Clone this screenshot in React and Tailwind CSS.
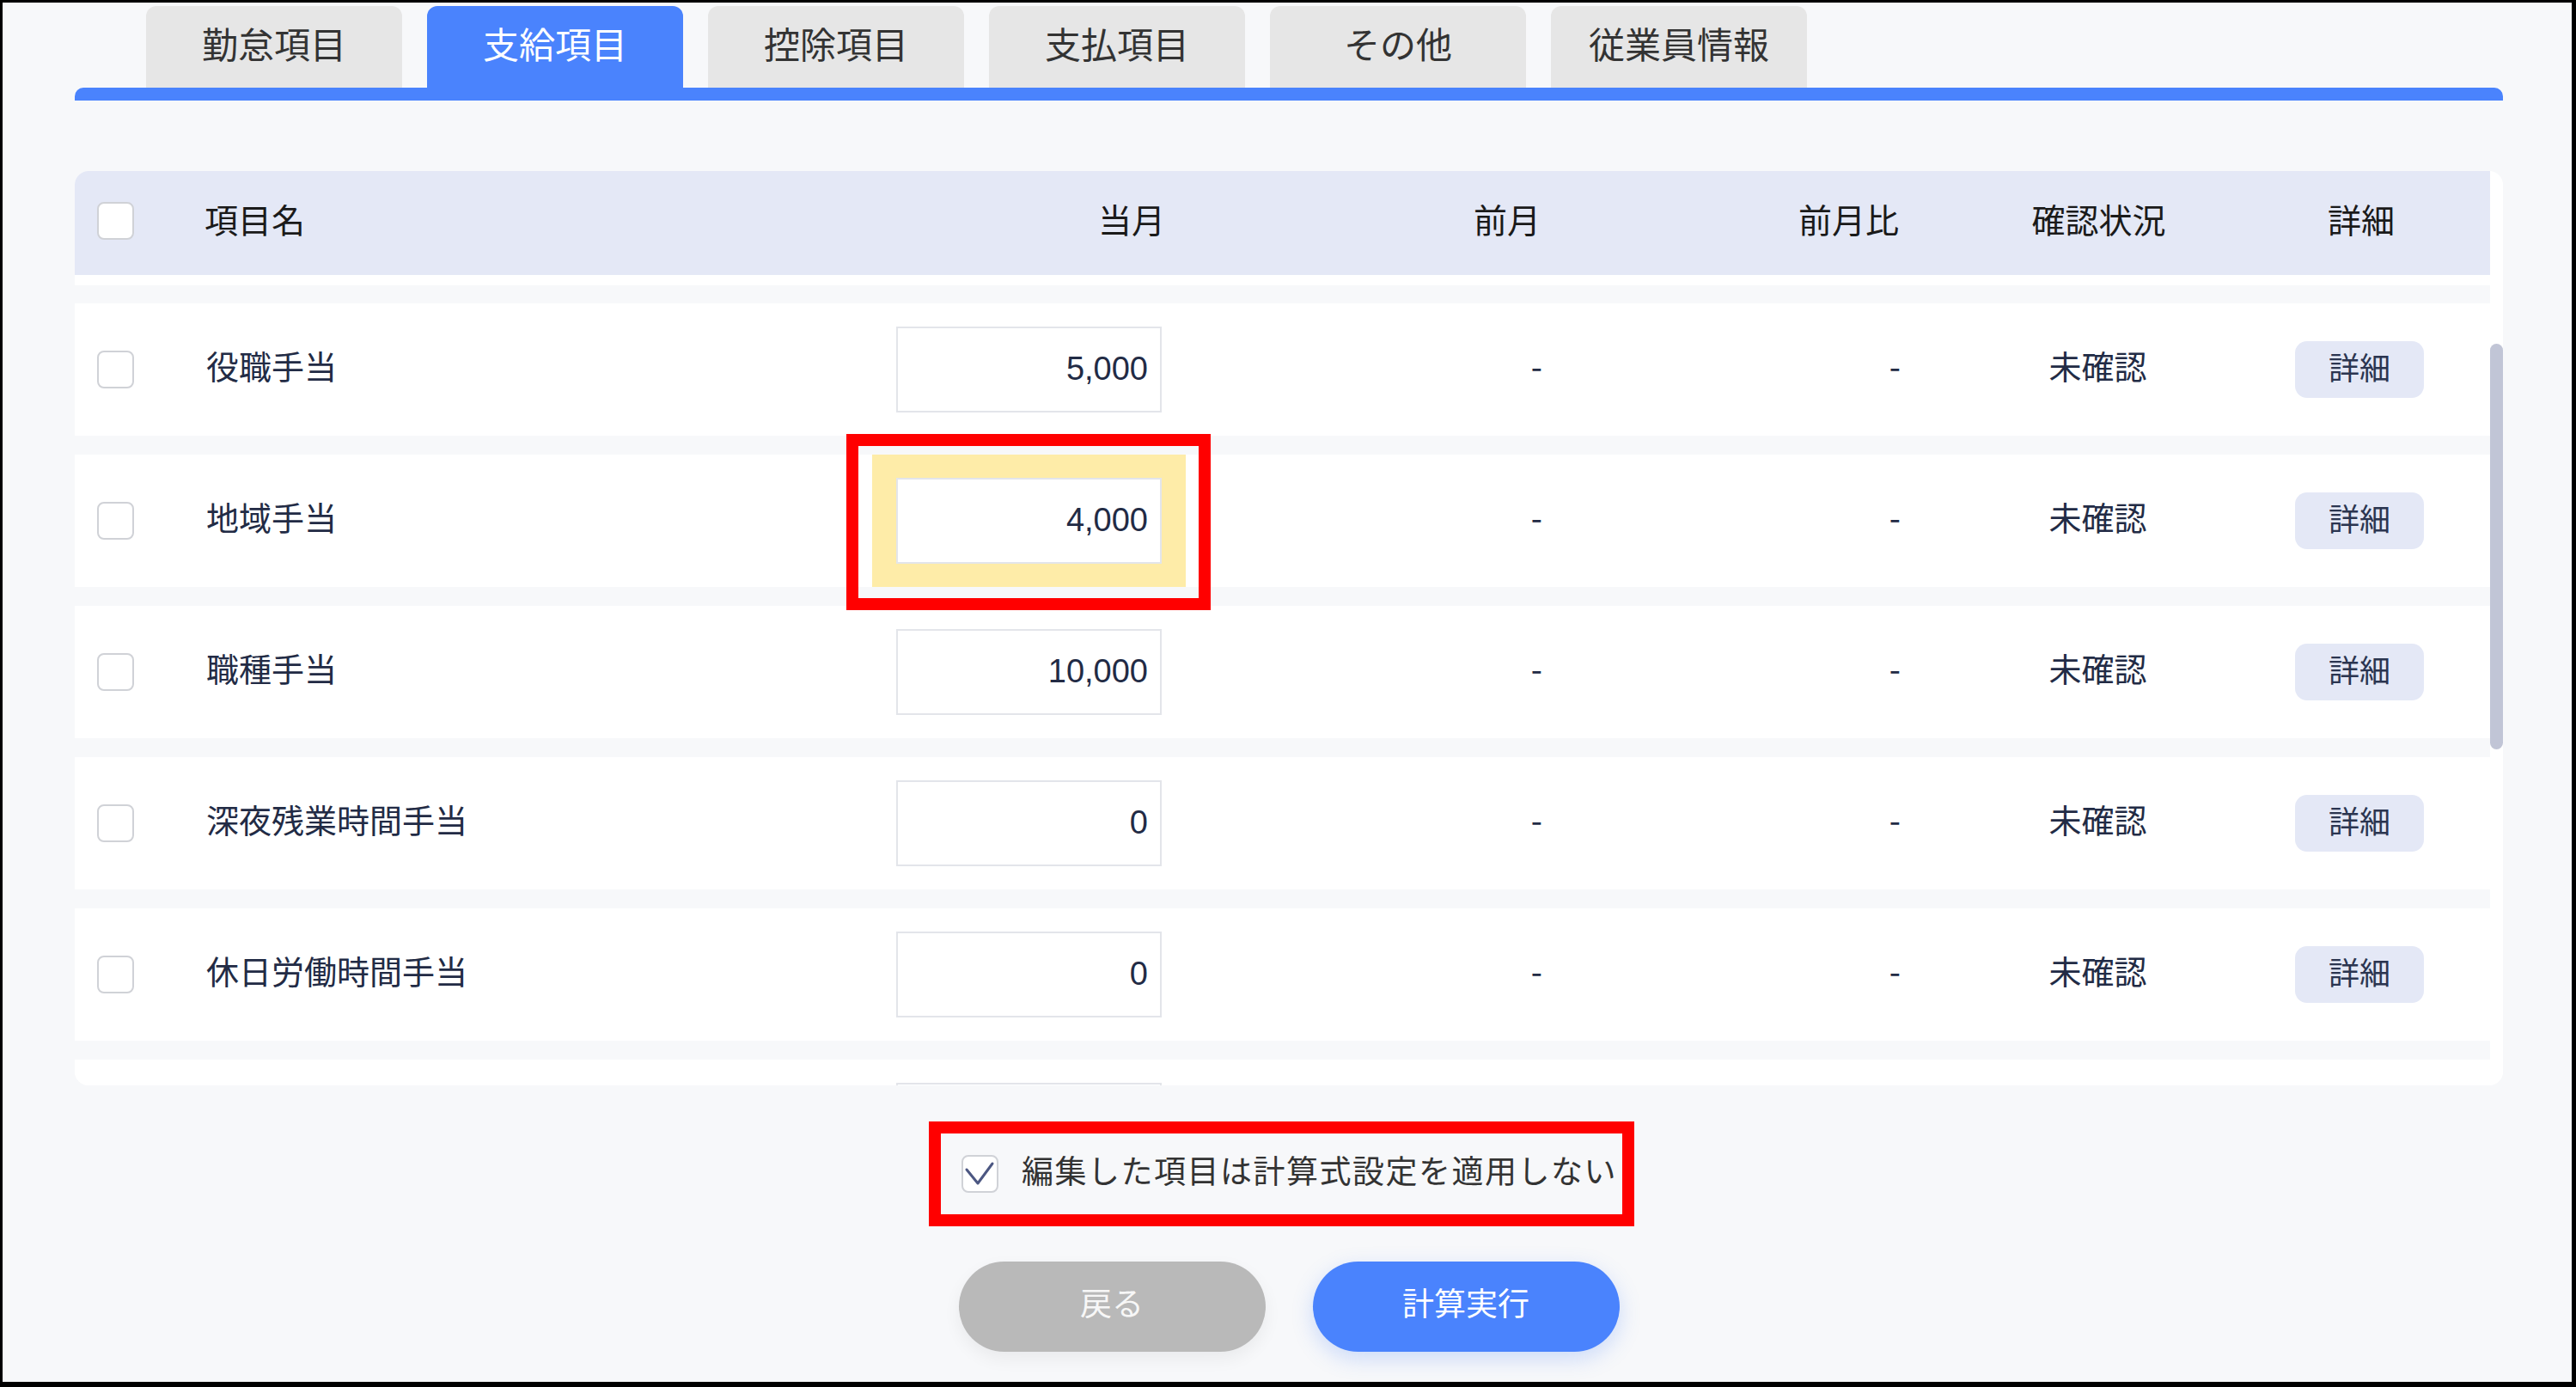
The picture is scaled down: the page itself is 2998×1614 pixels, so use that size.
import React from 'react'

const tabs = ['勤怠項目', '支給項目', '控除項目', '支払項目', 'その他', '従業員情報']

const rows = [
  { name: '役職手当', value: '5,000' },
  { name: '地域手当', value: '4,000', highlight: true },
  { name: '職種手当', value: '10,000' },
  { name: '深夜残業時間手当', value: '0' },
  { name: '休日労働時間手当', value: '0' },
  { name: '', value: '', partial: true },
]

// Noto CJK sits a little low with leading-none, nudge the glyphs up
const up = 'relative top-[-5px]'

const Checkbox = ({ checked }) => (
  <div className="w-[43px] h-[44px] shrink-0 rounded-[8px] border-2 border-[#d0d2d7] bg-white flex items-center justify-center">
    {checked && (
      <svg width="39" height="40" viewBox="0 0 39 40" fill="none">
        <polyline points="4,15 17,31 34,8" stroke="#4c5782" strokeWidth="3" strokeLinecap="round" strokeLinejoin="round" />
      </svg>
    )}
  </div>
)

const Row = ({ row }) => (
  <div className="h-[154px] shrink-0 bg-white flex items-center text-[38px] leading-none text-[#222b45]">
    <div className="w-[153px] shrink-0 pl-[26px]">
      {!row.partial && <Checkbox />}
    </div>
    <div className={`w-[775px] shrink-0 ${up}`}>{row.name}</div>
    <div className={`relative w-[365px] h-full shrink-0 flex items-center justify-center ${row.highlight ? 'bg-[#feeca8]' : ''}`}>
      <input
        readOnly
        value={row.value}
        className="w-[309px] h-[100px] border-2 border-[#e3e5ea] bg-white text-right pr-[14px] pb-[2px] text-[38px] text-[#222b45] font-['Liberation_Sans',sans-serif] outline-none"
      />
      {row.highlight && (
        <div className="absolute left-[-30px] top-[-24px] right-[-29px] bottom-[-27px] border-[14px] border-[#ff0000]" />
      )}
    </div>
    {!row.partial && (
      <>
        <div className={`w-[415px] shrink-0 text-right ${up}`}>-</div>
        <div className={`w-[417px] shrink-0 text-right ${up}`}>-</div>
        <div className={`w-[459px] shrink-0 text-center ${up}`}>未確認</div>
        <div className="w-[150px] shrink-0">
          <div className="w-[150px] h-[66px] rounded-[14px] bg-[#e4e8f6] flex items-center justify-center text-[36px] text-[#2b3550]">
            <span className="relative top-[-4px]">詳細</span>
          </div>
        </div>
      </>
    )}
  </div>
)

export default function App() {
  return (
    <div className="w-[2998px] h-[1614px] border-t-[3px] border-l-[3px] border-r-[5px] border-b-[6px] border-black bg-[#f7f8fa] font-['Noto_Sans_CJK_JP',sans-serif] overflow-hidden">
      <div className="pt-[4px] pl-[84px] pr-[80px] flex flex-col">
        {/* tabs */}
        <div className="h-[95px] flex items-end gap-[29px] pl-[83px]">
          {tabs.map((t, i) => (
            <div
              key={t}
              className={`w-[298px] h-[95px] rounded-t-[12px] flex items-center justify-center text-[42px] leading-none ${
                i === 1 ? 'bg-[#4a83fd] text-white' : 'bg-[#e6e6e6] text-[#333333]'
              }`}
            >
              <span className={up}>{t}</span>
            </div>
          ))}
        </div>
        <div className="h-[15px] bg-[#4a83fd] rounded-t-[10px]" />

        {/* table card */}
        <div className="mt-[82px] h-[1064px] bg-white rounded-[16px] overflow-hidden flex flex-col">
          <div className="h-[121px] shrink-0 mr-[15px] bg-[#e4e8f6] flex items-center text-[39px] leading-none text-[#1a1a1a]">
            <div className="w-[151px] shrink-0 pl-[26px] relative top-[-3px]">
              <Checkbox />
            </div>
            <div className={`w-[777px] shrink-0 ${up}`}>項目名</div>
            <div className={`w-[365px] shrink-0 text-right pr-[24px] ${up}`}>当月</div>
            <div className={`w-[413px] shrink-0 text-right ${up}`}>前月</div>
            <div className={`w-[417px] shrink-0 text-right ${up}`}>前月比</div>
            <div className={`w-[465px] shrink-0 text-center ${up}`}>確認状況</div>
            <div className={`w-[146px] shrink-0 text-center ${up}`}>詳細</div>
          </div>
          <div className="flex-1 flex min-h-0">
            <div className="flex-1 flex flex-col overflow-hidden">
              <div className="h-[12px] shrink-0 bg-white" />
              {rows.map((row, i) => (
                <React.Fragment key={i}>
                  <div className={`${i === 0 ? 'h-[21px]' : 'h-[22px]'} shrink-0 bg-[#f7f8fa]`} />
                  <Row row={row} />
                </React.Fragment>
              ))}
            </div>
            <div className="w-[15px] shrink-0 bg-white">
              <div className="mt-[80px] h-[472px] rounded-full bg-[#c1c5d6]" />
            </div>
          </div>
        </div>

        {/* option + buttons */}
        <div className="flex flex-col items-center">
          <div className="mt-[42px] mr-[17px] w-[821px] h-[122px] border-[14px] border-[#ff0000] flex items-center pl-[24px] gap-[27px]">
            <Checkbox checked />
            <span className={`text-[37px] leading-none tracking-[1.5px] text-[#333333] whitespace-nowrap ${up}`}>
              編集した項目は計算式設定を適用しない
            </span>
          </div>
          <div className="mt-[41px] flex gap-[55px]">
            <button className="w-[357px] h-[105px] rounded-full bg-[#b9b9b9] text-[#f7f7f7] text-[37px] leading-none shadow-[0_8px_20px_rgba(0,0,0,0.06)]">
              <span className={up}>戻る</span>
            </button>
            <button className="w-[357px] h-[105px] rounded-full bg-[#4a83fd] text-white text-[37px] leading-none shadow-[0_8px_24px_rgba(74,131,253,0.25)]">
              <span className={up}>計算実行</span>
            </button>
          </div>
        </div>
      </div>
    </div>
  )
}
